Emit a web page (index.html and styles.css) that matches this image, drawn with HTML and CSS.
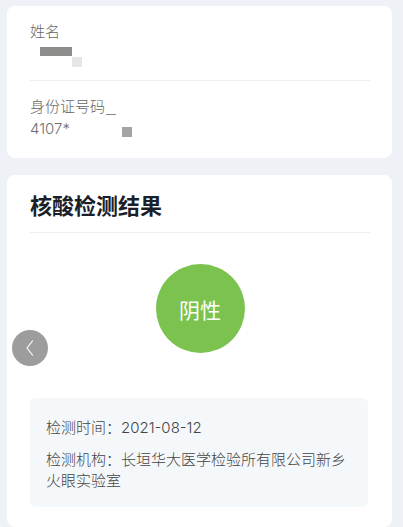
FILE: index.html
```html
<!DOCTYPE html>
<html lang="zh-CN">
<head>
    <meta charset="UTF-8">
    <meta name="viewport" content="width=device-width, initial-scale=1.0">
    <title>核酸检测结果</title>
    <link rel="stylesheet" href="styles.css">
</head>
<body>
    <div class="page">
        <div class="card info-card">
            <div class="field">
                <div class="field-label">姓名</div>
                <div class="field-value name-value">
                    <span class="mask mask-dark"></span><span class="mask mask-light"></span>
                </div>
            </div>
            <div class="field last">
                <div class="field-label">身份证号码<span class="smudge"></span></div>
                <div class="field-value">4107*<span class="mask mask-id"></span></div>
            </div>
        </div>

        <div class="card result-card">
            <h2 class="card-title">核酸检测结果</h2>
            <div class="result-badge">阴性</div>
            <div class="detail-box">
                <p>检测时间：2021-08-12</p>
                <p>检测机构：长垣华大医学检验所有限公司新乡火眼实验室</p>
            </div>
        </div>
    </div>

    <button class="back-btn" aria-label="返回">
        <svg width="12" height="18" viewBox="0 0 12 18">
            <path d="M8.5 2 L3 9 L8.5 16" fill="none" stroke="#fff" stroke-width="1.2" stroke-linecap="round" stroke-linejoin="round"/>
        </svg>
    </button>
</body>
</html>
```

FILE: styles.css
```css
body {
    font-family: Inter, "Noto Sans CJK SC", "Noto Sans", sans-serif;
    font-weight: 300;
    margin: 0;
    padding: 0;
    background-color: #eef1f5;
    color: #333;
}
.page {
    padding: 6px 11px 0 7px;
}
.card {
    background: #ffffff;
    border-radius: 8px;
    padding: 0 22px 0 23px;
}
.info-card {
    padding-top: 0;
    padding-bottom: 19px;
}
.field {
    padding-top: 16px;
    border-bottom: 1px solid #eeeff2;
}
.field.last {
    border-bottom: none;
}
.field-label {
    font-size: 15px;
    line-height: 20px;
    color: #666;
}
.field-value {
    font-size: 15px;
    line-height: 20px;
    color: #707070;
    margin-top: 2px;
    display: flex;
    align-items: center;
}
.name-value {
    height: 28px;
    margin: 0 0 10px;
    align-items: flex-start;
}
.mask {
    display: inline-block;
}
.mask-dark {
    width: 32px;
    height: 9px;
    margin: 5px 0 0 10px;
    background: #8d8d8b;
}
.mask-light {
    width: 10px;
    height: 10px;
    margin-top: 15px;
    background: #e6e6e6;
}
.mask-id {
    width: 10px;
    height: 10px;
    margin: 6px 0 0 52px;
    background: #a4a4a4;
}
.smudge {
    display: inline-block;
    width: 10px;
    height: 1px;
    margin-left: 1px;
    background: #8a8a8a;
    vertical-align: -3px;
}
.result-card {
    margin-top: 17px;
    padding-top: 16px;
    padding-bottom: 20px;
}
.card-title {
    margin: 0;
    font-size: 22px;
    line-height: 30px;
    font-weight: bold;
    color: #1b1f2a;
    padding-bottom: 11px;
    border-bottom: 1px solid #eeeff2;
}
.result-badge {
    width: 89px;
    height: 89px;
    margin: 31px auto 0;
    border-radius: 50%;
    background-color: #7bc34e;
    color: #fff;
    font-size: 21px;
    font-weight: 400;
    display: flex;
    align-items: center;
    justify-content: center;
}
.detail-box {
    margin: 45px 2px 0 0;
    padding: 19px 16px 16px;
    background-color: #f5f8fb;
    border-radius: 6px;
}
.detail-box p {
    margin: 0;
    font-size: 15px;
    line-height: 21px;
    color: #444;
}
.detail-box p + p {
    margin-top: 11px;
}
.back-btn {
    position: absolute;
    left: 12px;
    top: 330px;
    width: 36px;
    height: 36px;
    border: none;
    border-radius: 50%;
    background-color: #9d9d9d;
    padding: 0;
    display: flex;
    align-items: center;
    justify-content: center;
    cursor: pointer;
}
```
